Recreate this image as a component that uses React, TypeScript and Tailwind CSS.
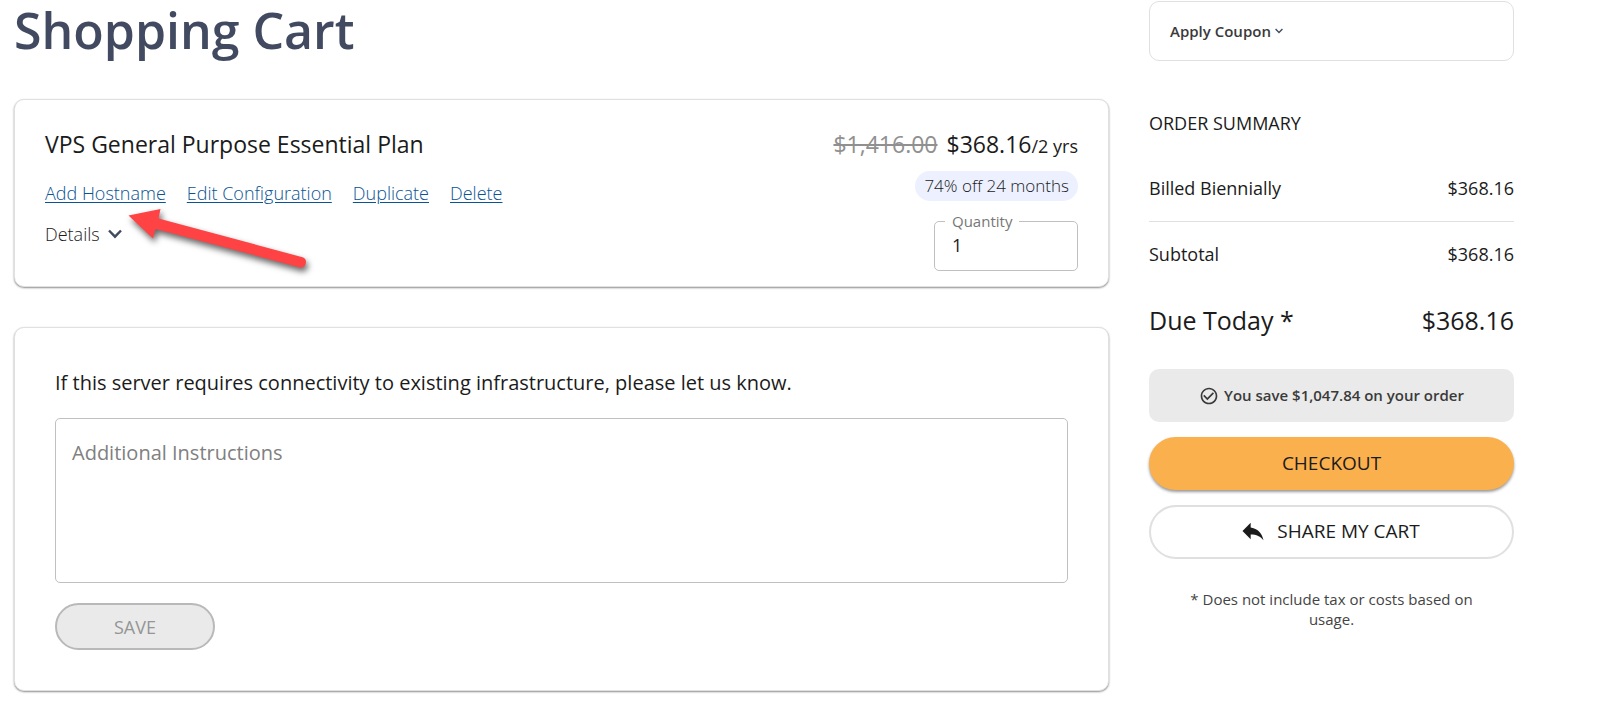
import { MdCheckCircleOutline, MdReply } from 'react-icons/md';

const actions = ['Add Hostname', 'Edit Configuration', 'Duplicate', 'Delete'];

const cardClass =
  'rounded-[10px] border border-[#e0e0e0] bg-white shadow-[0_1px_2px_rgba(0,0,0,0.45)]';

function Chevron({ className }: { className: string }) {
  return (
    <svg viewBox="0 0 14 10" className={className} fill="none" stroke="#414a60" strokeWidth="2.4" aria-hidden="true">
      <path d="M1 1.5 7 7.7l6-6.2" />
    </svg>
  );
}

function PointerArrow() {
  return (
    <svg
      viewBox="0 0 200 80"
      className="pointer-events-none absolute top-24 left-[106px] h-[80px] w-[200px] overflow-visible drop-shadow-[2px_4px_3px_rgba(0,0,0,0.6)]"
      aria-hidden="true"
    >
      <path
        d="M7.5 19.5 39.5 13l-2 9.5L181.5 61.2a5.3 5.3 0 0 1-2.6 10.2L34.5 33 32 42.5Z"
        fill="#ff4244"
      />
    </svg>
  );
}

function PlanCard() {
  return (
    <section className={`relative flex items-start justify-between px-[30px] pt-7 pb-[15px] ${cardClass}`}>
      <div className="flex flex-col items-start">
        <h2 className="text-[23px] leading-8">VPS General Purpose Essential Plan</h2>
        <nav className="mt-[19px] flex gap-[21px] text-lg leading-7 font-light text-[#0b5394]">
          {actions.map((label) => (
            <a key={label} href="#" className="underline underline-offset-2">
              {label}
            </a>
          ))}
        </nav>
        <button type="button" className="mt-[13px] flex items-center gap-2 text-lg leading-7 font-light">
          Details
          <Chevron className="h-[10px] w-[14px]" />
        </button>
      </div>
      <div className="flex flex-col items-end">
        <p className="text-[23px] leading-8">
          <s className="mr-[9px] text-[#909090]">$1,416.00</s>
          $368.16<span className="text-lg">/2 yrs</span>
        </p>
        <p className="mt-[11px] rounded-full bg-[#ecf0ff] px-[9px] text-[17px] leading-[30px] font-light">
          74% off 24 months
        </p>
        <fieldset className="mt-3 h-[58px] w-36 rounded-[5px] border border-[#c0c0c0] px-[10px]">
          <legend className="px-[7px] text-[15px] leading-4 text-[#777]">
            <label htmlFor="quantity">Quantity</label>
          </legend>
          <input
            id="quantity"
            type="text"
            inputMode="numeric"
            defaultValue="1"
            className="block w-full px-[7px] pt-1 text-lg leading-6 outline-none"
          />
        </fieldset>
      </div>
      <PointerArrow />
    </section>
  );
}

function InstructionsCard() {
  return (
    <section className={`px-10 pt-10 pb-10 ${cardClass}`}>
      <label htmlFor="instructions" className="block text-xl leading-[30px]">
        If this server requires connectivity to existing infrastructure, please let us know.
      </label>
      <textarea
        id="instructions"
        placeholder="Additional Instructions"
        className="mt-5 block h-[165px] w-full resize-none rounded-[5px] border border-[#c0c0c0] px-4 py-5 text-xl leading-7 outline-none placeholder:text-[#808080]"
      />
      <button
        type="button"
        disabled
        className="mt-5 block h-[47px] w-40 rounded-full border-2 border-[#b9b9b9] bg-[#eaeaea] text-lg text-[#959595]"
      >
        SAVE
      </button>
    </section>
  );
}

function SummaryRow({ label, amount }: { label: string; amount: string }) {
  return (
    <div className="flex justify-between text-lg leading-6">
      <dt>{label}</dt>
      <dd>{amount}</dd>
    </div>
  );
}

function OrderSummary() {
  return (
    <aside className="w-[365px] shrink-0 pt-px">
      <div className="rounded-[10px] border border-[#e0e0e0] px-5 py-[17px]">
        <button type="button" className="flex items-center gap-1 text-[15px] leading-6 font-semibold text-[#3a3a3a]">
          Apply Coupon
          <Chevron className="h-[6px] w-[8px]" />
        </button>
      </div>
      <h2 className="mt-[50px] text-lg leading-6">ORDER SUMMARY</h2>
      <dl className="mt-[41px]">
        <SummaryRow label="Billed Biennially" amount="$368.16" />
        <div className="mt-[21px] border-t border-[#e0e0e0] pt-5">
          <SummaryRow label="Subtotal" amount="$368.16" />
        </div>
        <div className="mt-[38px] flex justify-between text-[25px] leading-8">
          <dt>Due Today *</dt>
          <dd>$368.16</dd>
        </div>
      </dl>
      <p className="mt-[33px] flex h-[53px] items-center justify-center gap-[5px] rounded-[10px] bg-[#eaeaea] text-[15px] font-semibold text-[#3a3a3a]">
        <MdCheckCircleOutline className="size-5" aria-hidden="true" />
        You save $1,047.84 on your order
      </p>
      <button
        type="button"
        className="mt-[15px] block h-[53px] w-full rounded-full bg-[#fbb04e] text-[19px] shadow-[0_2px_3px_rgba(0,0,0,0.4)]"
      >
        CHECKOUT
      </button>
      <button
        type="button"
        className="mt-[15px] flex h-[54px] w-full items-center justify-center gap-[10px] rounded-full border-2 border-[#e0e0e0] pr-1 pb-0.5 text-[19px]"
      >
        <MdReply className="size-7" aria-hidden="true" />
        SHARE MY CART
      </button>
      <p className="mt-[30px] px-8 text-center text-[15px] leading-5 text-[#444]">
        * Does not include tax or costs based on usage.
      </p>
    </aside>
  );
}

export default function App() {
  return (
    <div className="flex items-start gap-10 bg-white pr-[86px] pb-5 pl-[14px] font-['Open_Sans',sans-serif] text-[#1b1b1b]">
      <main className="min-w-0 flex-1">
        <h1 className="text-[50px] leading-[60px] font-semibold text-[#414a60]">Shopping Cart</h1>
        <div className="mt-[39px] flex flex-col gap-10">
          <PlanCard />
          <InstructionsCard />
        </div>
      </main>
      <OrderSummary />
    </div>
  );
}
